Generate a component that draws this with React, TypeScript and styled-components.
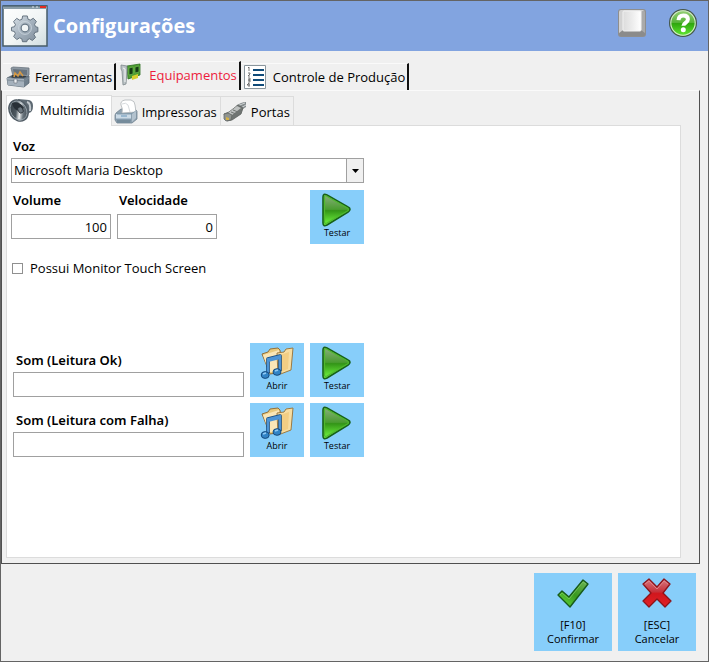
import React, { useId, useState } from "react";
import styled, { createGlobalStyle } from "styled-components";

const GlobalStyle = createGlobalStyle`
  *, *::before, *::after { box-sizing: border-box; }
  body { margin: 0; background: #f0f0f0; }
  body, button, input, select { font-family: "Open Sans", "Noto Sans", sans-serif; font-size: 13px; line-height: 18px; color: #000; }
`;

const Window = styled.div`
  display: flex;
  flex-direction: column;
  min-height: 100vh;
  border: 1px solid #646464;
  background: #f0f0f0;
`;

const Header = styled.header`
  display: flex;
  align-items: center;
  height: 50px;
  padding: 0 10px 0 1px;
  background: #82a4e0;
`;

const Title = styled.h1`
  flex: 1;
  margin: 0 0 0 5px;
  color: #fff;
  font-family: "Open Sans", sans-serif;
  font-size: 20px;
  line-height: 28px;
  font-weight: 700;
`;

const HeaderActions = styled.div`
  display: flex;
  gap: 21px;
  padding-bottom: 6px;
`;

const IconButton = styled.button`
  display: flex;
  padding: 0;
  border: 0;
  background: none;
`;

const MainTabs = styled.nav`
  display: flex;
  align-items: flex-end;
  padding: 10px 0 0 2px;
`;

const MainTab = styled.button<{ $active?: boolean }>`
  display: flex;
  align-items: center;
  gap: 5px;
  height: ${(p) => (p.$active ? 29 : 27)}px;
  padding: ${(p) => (p.$active ? "0 2px 2px 4px" : "0 2px 0 3px")};
  border: 0;
  border-top: 1px solid #fafafa;
  border-right: 2px solid #111;
  background: #f0f0f0;
  color: ${(p) => (p.$active ? "#ed1c3c" : "#000")};
  white-space: nowrap;
`;

const MainPage = styled.main`
  display: flex;
  flex: 1;
  flex-direction: column;
  margin-right: 8px;
  padding: 4px 18px 5px 4px;
  border: 1px solid #505050;
  border-top-color: #fafafa;
`;

const SubTabs = styled.nav`
  display: flex;
  align-items: flex-end;
`;

const SubTab = styled.button<{ $active?: boolean }>`
  display: flex;
  align-items: center;
  gap: ${(p) => (p.$active ? 6 : 4)}px;
  height: ${(p) => (p.$active ? 31 : 29)}px;
  margin-bottom: ${(p) => (p.$active ? -1 : 0)}px;
  padding: ${(p) => (p.$active ? "0 6px 2px 1px" : "2px 3px 0 2px")};
  border: 1px solid #dcdcdc;
  border-bottom: 0;
  border-left-width: ${(p) => (p.$active ? 1 : 0)}px;
  background: ${(p) => (p.$active ? "#fff" : "#f0f0f0")};
  white-space: nowrap;
  z-index: ${(p) => (p.$active ? 1 : 0)};
`;

const Panel = styled.section`
  flex: 1;
  padding: 11px 4px;
  border: 1px solid #dcdcdc;
  background: #fff;
`;

const Form = styled.form`
  display: flex;
  flex-direction: column;
  max-width: 353px;
`;

const Label = styled.label`
  padding-left: 2px;
  font-family: "Noto Sans", sans-serif;
  font-weight: 600;
`;

const Field = styled.div<{ $wide?: boolean }>`
  display: flex;
  flex-direction: column;
  gap: ${(p) => (p.$wide ? 3 : 5)}px;
  ${(p) => (p.$wide ? "flex: 1;" : "")}
`;

const VoiceField = styled(Field)`
  gap: 3px;
`;

const TextInput = styled.input<{ $numeric?: boolean }>`
  width: ${(p) => (p.$numeric ? "100px" : "100%")};
  height: 25px;
  padding: 0 3px;
  border: 1px solid #a0a0a0;
  border-radius: 0;
  background: #fff;
  outline: none;
  text-align: ${(p) => (p.$numeric ? "right" : "left")};
`;

const SelectBox = styled.div`
  display: grid;
  > * { grid-area: 1 / 1; }
`;

const Select = styled.select`
  appearance: none;
  width: 100%;
  height: 25px;
  padding: 0 22px 2px 2px;
  border: 1px solid #a0a0a0;
  border-radius: 0;
  background: #fff;
  outline: none;
`;

const SelectArrow = styled.span`
  display: flex;
  align-items: center;
  justify-content: center;
  justify-self: end;
  width: 18px;
  height: 25px;
  border: 1px solid #a0a0a0;
  background: #f0f0f0;
  pointer-events: none;
`;

const VoiceRow = styled.div`
  display: flex;
  align-items: flex-start;
  justify-content: space-between;
  margin-top: 7px;
`;

const NumberFields = styled.div`
  display: flex;
  gap: 6px;
  padding-top: 1px;
`;

const CheckRow = styled.label`
  display: flex;
  align-items: center;
  gap: 7px;
  margin: 15px 0 0 1px;
`;

const CheckBox = styled.input`
  appearance: none;
  width: 11px;
  height: 11px;
  margin: 0;
  border: 1px solid #909090;
  background: #fff;
  &:checked { background: #444; box-shadow: inset 0 0 0 2px #fff; }
`;

const SoundList = styled.div`
  display: flex;
  flex-direction: column;
  gap: 6px;
  margin-top: 66px;
`;

const SoundRow = styled.div`
  display: flex;
  align-items: flex-end;
  gap: 6px;
  padding-left: 2px;
`;

const SoundLabel = styled(Label)`
  padding-left: 3px;
`;

const Tile = styled.button`
  display: flex;
  flex-direction: column;
  align-items: center;
  width: 54px;
  height: 54px;
  padding: 3px 0 0;
  border: 0;
  background: #87cefa;
  font-size: 9px;
  line-height: 12px;
`;

const Footer = styled.footer`
  display: flex;
  justify-content: flex-end;
  gap: 6px;
  padding: 9px 12px 10px;
`;

const ActionButton = styled.button`
  display: flex;
  flex-direction: column;
  align-items: center;
  gap: 7px;
  width: 78px;
  height: 78px;
  padding: 4px 0 0;
  border: 0;
  background: #87cefa;
  font-size: 11px;
  line-height: 14px;
`;

const Caption = styled.span`
  white-space: pre-line;
`;

const WindowGearIcon = () => {
  const id = useId();
  return (
    <svg width="46" height="42" viewBox="0 0 46 42" aria-hidden="true">
      <defs>
        <linearGradient id={id + "p"} x1="0" y1="0" x2="1" y2="1">
          <stop offset="0" stopColor="#fff" /><stop offset=".55" stopColor="#f1f5f5" /><stop offset="1" stopColor="#cfdcdf" />
        </linearGradient>
        <linearGradient id={id + "g"} x1="0" y1="0" x2="1" y2="1">
          <stop offset="0" stopColor="#dce4ea" /><stop offset=".5" stopColor="#a4b1bd" /><stop offset="1" stopColor="#7f8d9b" />
        </linearGradient>
      </defs>
      <rect x="1" y="1" width="44" height="40" fill={`url(#${id}p)`} stroke="#475c68" strokeWidth="1.5" />
      <path d="M1 1h44v3H1z" fill="#8b9ea9" /><path d="M1 1h44" stroke="#3d5564" />
      <path d="M38 1h6v2h-6z" fill="#e32c22" /><path d="M30 2h2m2 0h2" stroke="#dfe6ea" />
      <g transform="translate(23 22) scale(.92)">
        <path d="M-2.5-12h5l.8 3.5 2.5 1 3.2-2 3.4 3.5-2 3.1 1 2.5 2.6.8v4.8l-3.3.7-1 2.4 1.8 3-3.5 3.4-3-1.9-2.3 1-.8 2.2h-4.6l-.8-3.2-2.4-1-3 1.9-3.4-3.4 1.8-3-1-2.4-3.2-.8V.4l3.3-.7 1-2.4-2-3.1L-9-9.4l3.2 2 2.5-1z" fill={`url(#${id}g)`} stroke="#5e6c79" />
        <circle cy="1" r="7" fill="none" stroke="#c9d3dc" />
        <circle cy="1" r="4.2" fill="#f1f5f6" stroke="#667685" strokeWidth="1.3" />
      </g>
    </svg>
  );
};

const KeyIcon = () => {
  const id = useId();
  return (
    <svg width="30" height="30" viewBox="0 0 30 30" aria-hidden="true">
      <defs>
        <linearGradient id={id} x1="0" y1="0" x2="1" y2="0"><stop offset="0" stopColor="#dcdcdc" /><stop offset=".5" stopColor="#ececec" /><stop offset="1" stopColor="#fff" /></linearGradient>
      </defs>
      <rect x="1" y="1" width="28" height="28" rx="3" fill="#8e8e8e" />
      <path d="M2 26L7 22h18l3 4q0 2-3 2H5q-3 0-3-2z" fill="#8b8b8b" />
      <path d="M2 4q0-2 2-2h22q2 0 1 1l-3 2H6v17l-4 3z" fill="#d2d2d2" />
      <path d="M28 4v21l-4-3V4l3-2z" fill="#aaa" />
      <rect x="6" y="3" width="18" height="20" rx="1" fill={`url(#${id})`} stroke="#f2f2f2" />
    </svg>
  );
};

const HelpIcon = () => {
  const id = useId();
  return (
    <svg width="30" height="30" viewBox="0 0 30 30" aria-hidden="true">
      <defs>
        <linearGradient id={id} x1="0" y1="0" x2="0" y2="1"><stop offset="0" stopColor="#9bd27c" /><stop offset=".48" stopColor="#58b43a" /><stop offset=".52" stopColor="#2fa60e" /><stop offset="1" stopColor="#64ed35" /></linearGradient>
      </defs>
      <circle cx="15" cy="15" r="13.4" fill={`url(#${id})`} stroke="#46564d" strokeWidth="1.2" />
      <circle cx="15" cy="15" r="12.2" fill="none" stroke="#d3e8cb" strokeWidth="1.1" />
      <path d="M10.5 12.2C10.7 8.7 12.6 7.4 15.3 7.4c3 0 4.6 1.6 4.6 3.8 0 3.7-4.5 3.4-4.5 6.6" fill="none" stroke="#fff" strokeWidth="4" />
      <circle cx="15.3" cy="21.8" r="2.5" fill="#fff" />
    </svg>
  );
};

const ToolboxIcon = () => (
  <svg width="24" height="22" viewBox="0 0 24 22" aria-hidden="true">
    <path d="M5 2l2-1 16 1v7l-3 3L7 10z" fill="#8b96a0" stroke="#69757f" strokeWidth=".8" />
    <path d="M7 3l14 1v5L8 8z" fill="#69747e" />
    <path d="M6 9l15 1-3 3-15-1z" fill="#343c43" />
    <path d="M8 11l1-4 3 3 2-4 3 4" fill="none" stroke="#d69a45" strokeWidth="1.6" />
    <path d="M1 12l4-2 1 2h12l5-2v7l-5 4-16-2z" fill="#71808d" stroke="#586671" strokeWidth=".8" />
    <path d="M1 12l17 1v8L2 19z" fill="#a5b1bc" /><path d="M1 14l17 1 5-3" fill="none" stroke="#7b8893" />
    <path d="M8 13h3v4H8z" fill="#edf0f2" stroke="#687078" strokeWidth=".6" />
  </svg>
);

const BoardIcon = () => (
  <svg width="24" height="26" viewBox="0 0 24 26" aria-hidden="true">
    <path d="M7 4l13-2v11L8 17z" fill="#4f9d32" stroke="#2b6d20" strokeWidth=".8" />
    <path d="M9 6l4-1v7l-4 1zM15 5l4-1v6l-4 1z" fill="#153c14" stroke="#70bb4f" strokeWidth=".7" />
    <path d="M12 14l6-2v4l-6 2z" fill="#d8cf30" />
    <path d="M1 3l6 1v5L6 22l-3 1-1-14-1-2z" fill="#bac2c5" stroke="#7e888b" strokeWidth=".8" /><path d="M3 6l2 1v13" fill="none" stroke="#f5f6f6" />
  </svg>
);

const NumberedListIcon = () => (
  <svg width="24" height="24" viewBox="0 0 24 24" aria-hidden="true">
    <path d="M.5.5h21v23H.5z" fill="#fff" stroke="#89959c" />
    <path d="M9 5h11M9 10h11M9 15h11M9 20h11" stroke="#104b79" strokeWidth="2" />
    <path d="M4 3l1-1v4M4 8h2v1l-2 2h2M4 13h2v2H4h2v2H4M5 22v-4l-2 2h3" fill="none" stroke="#555" strokeWidth=".8" />
  </svg>
);

const SpeakerIcon = () => {
  const id = useId();
  return (
    <svg width="26" height="26" viewBox="0 0 26 26" aria-hidden="true">
      <defs><linearGradient id={id} x1="0" y1="0" x2="1" y2="1"><stop offset="0" stopColor="#283037" /><stop offset=".42" stopColor="#4d5860" /><stop offset=".55" stopColor="#edf0f1" /><stop offset=".68" stopColor="#68737b" /><stop offset="1" stopColor="#242c32" /></linearGradient></defs>
      <path d="M10 2l11 1q4 1 4 6 0 6-4 7l-8 7z" fill="#5d6972" />
      <path d="M19 5q4 1 3 9" fill="none" stroke="#c2c9ce" strokeWidth="2" />
      <ellipse cx="10.5" cy="13.5" rx="9" ry="11.2" transform="rotate(-32 10.5 13.5)" fill={`url(#${id})`} stroke="#515c65" strokeWidth="1.4" />
      <ellipse cx="10.5" cy="13.5" rx="7.8" ry="10" transform="rotate(-32 10.5 13.5)" fill="none" stroke="#9ca8b0" strokeWidth=".8" />
      <path d="M4 6q8-2 12 5l-4 3Q5 13 4 6z" fill="#283037" />
      <ellipse cx="12.5" cy="13" rx="2.5" ry="3.3" transform="rotate(-32 12.5 13)" fill="#6b767e" stroke="#20272d" strokeWidth=".7" />
    </svg>
  );
};

const PrinterIcon = () => (
  <svg width="24" height="26" viewBox="0 0 24 26" aria-hidden="true">
    <path d="M2 14l5-4h14l2 2v8l-5 4H3l-2-3v-5z" fill="#8ea1af" stroke="#718392" strokeWidth=".8" />
    <path d="M8 14q1-5-1-8-1-4 4-5h6q4 1 4 5l1 7z" fill="#fff" stroke="#aeb4b8" strokeWidth=".8" />
    <path d="M8 5q4-2 6 1l2 7" fill="none" stroke="#d6dadd" />
    <path d="M2 15h15v5H2z" fill="#cbdae6" /><path d="M3 15h14l5-3M2 20h15" stroke="#7793a7" strokeWidth=".8" fill="none" />
    <path d="M3 21h14l-1 3H3z" fill="#758b9b" /><path d="M18 15l4-3v7l-4 4z" fill="#b3c2ce" />
    <path d="M7 17h6" stroke="#6795b9" />
  </svg>
);

const PlugIcon = () => (
  <svg width="24" height="22" viewBox="0 0 24 22" aria-hidden="true">
    <path d="M13 5q5-4 10-4v5l-8 5z" fill="#838a8c" /><path d="M14 5l8-3M16 8l7-4" stroke="#d0d4d5" />
    <path d="M1 13l5-2 9-7 5 3-2 6-9 6-5 1z" fill="#707573" stroke="#5a5f5d" strokeWidth=".8" />
    <path d="M5 12l9-7 4 2-9 7z" fill="#bfc2c1" /><path d="M1 13l4-1 4 2-1 5-5 1-2-2z" fill="#8f938f" stroke="#646a67" strokeWidth=".8" />
    <path d="M3 16l3 1v2H3z" fill="#d3b148" /><path d="M8 11l5 2m-3-4l5 2" stroke="#6f7472" />
  </svg>
);

const PlayIcon = () => {
  const id = useId();
  return (
    <svg width="32" height="34" viewBox="0 0 32 34" aria-hidden="true">
      <defs><linearGradient id={id} x1="0" y1="0" x2="0" y2="1"><stop offset="0" stopColor="#8baf7f" /><stop offset=".48" stopColor="#4a9c30" /><stop offset=".52" stopColor="#339517" /><stop offset="1" stopColor="#76ff43" /></linearGradient></defs>
      <path d="M2 4q0-4 4-2l21 12q4 2 0 5L6 32q-4 2-4-2z" fill={`url(#${id})`} stroke="#17611a" strokeWidth="1.6" />
      <path d="M3.5 4q0-2 2-1l21 12q2 2 0 3L6 30q-2.5 1-2.5-1z" fill="none" stroke="#4fb82d" strokeWidth="1.2" />
    </svg>
  );
};

const MusicFolderIcon = () => (
  <svg width="34" height="34" viewBox="0 0 34 34" aria-hidden="true">
    <path d="M2 8l6-2 2-3 8-1 2 2 3 22-13 2z" fill="#e9c97b" stroke="#91703b" />
    <path d="M3 9l16-5 2 22H9z" fill="#f9e6b7" />
    <path d="M17 7l7-1 2-3 7-1-2 22-13 5z" fill="#f7dda1" stroke="#9b7a43" />
    <path d="M20 9l9-3-1 17-8 3z" fill="#f2ce84" />
    <path d="M8 27V13l12-3v15" fill="none" stroke="#174d81" strokeWidth="3.6" strokeLinejoin="round" />
    <path d="M8 27V13l12-3v15M8 15l12-3" fill="none" stroke="#4c94d6" strokeWidth="2" />
    <ellipse cx="5.2" cy="29" rx="4" ry="3.4" fill="#3284c6" stroke="#154a7d" /><ellipse cx="17" cy="26" rx="4" ry="3.3" fill="#3284c6" stroke="#154a7d" />
    <path d="M3 28l3-1M15 25l3-1" stroke="#92cbf5" strokeWidth="1.5" />
  </svg>
);

const CheckIcon = () => {
  const id = useId();
  return (
    <svg width="32" height="34" viewBox="0 0 32 34" aria-hidden="true">
      <defs><linearGradient id={id} x1="1" y1="0" x2="0" y2="1"><stop offset="0" stopColor="#70b45a" /><stop offset=".5" stopColor="#39991f" /><stop offset="1" stopColor="#67e13d" /></linearGradient></defs>
      <path d="M1 18l4-4 7 6L26 3l5 4-18 23z" fill={`url(#${id})`} stroke="#175a1b" strokeWidth="1.4" strokeLinejoin="round" />
      <path d="M3 18l2-2 7 6L26 5l3 2" fill="none" stroke="#80cd68" strokeWidth=".7" />
    </svg>
  );
};

const CrossIcon = () => {
  const id = useId();
  return (
    <svg width="32" height="34" viewBox="0 0 32 34" aria-hidden="true">
      <defs><linearGradient id={id} x1="0" y1="0" x2="0" y2="1"><stop offset="0" stopColor="#d77a80" /><stop offset=".45" stopColor="#c6313a" /><stop offset=".52" stopColor="#d1161d" /><stop offset="1" stopColor="#e12226" /></linearGradient></defs>
      <path d="M2 7l6-5 8 8 7-8 6 5-7 9 8 8-6 6-8-8-8 8-6-6 8-8z" fill={`url(#${id})`} stroke="#8b141b" strokeWidth="1.3" strokeLinejoin="round" />
      <path d="M4 7l4-3 8 8 7-8 4 3" fill="none" stroke="#e68b90" strokeWidth=".8" />
    </svg>
  );
};

const TestButton = () => <Tile type="button"><PlayIcon />Testar</Tile>;

const SoundField = ({ id, label }: { id: string; label: string }) => (
  <SoundRow>
    <Field $wide>
      <SoundLabel htmlFor={id}>{label}</SoundLabel>
      <TextInput id={id} type="text" />
    </Field>
    <Tile type="button"><MusicFolderIcon />Abrir</Tile>
    <TestButton />
  </SoundRow>
);

export default function App() {
  const [touch, setTouch] = useState(false);
  return (
    <>
      <GlobalStyle />
      <Window>
        <Header>
          <WindowGearIcon />
          <Title>Configurações</Title>
          <HeaderActions>
            <IconButton aria-label="Teclado"><KeyIcon /></IconButton>
            <IconButton aria-label="Ajuda"><HelpIcon /></IconButton>
          </HeaderActions>
        </Header>
        <MainTabs>
          <MainTab><ToolboxIcon />Ferramentas</MainTab>
          <MainTab $active><BoardIcon />Equipamentos</MainTab>
          <MainTab><NumberedListIcon />Controle de Produção</MainTab>
        </MainTabs>
        <MainPage>
          <SubTabs>
            <SubTab $active><SpeakerIcon />Multimídia</SubTab>
            <SubTab><PrinterIcon />Impressoras</SubTab>
            <SubTab><PlugIcon />Portas</SubTab>
          </SubTabs>
          <Panel>
            <Form onSubmit={(e) => e.preventDefault()}>
              <VoiceField>
                <Label htmlFor="voz">Voz</Label>
                <SelectBox>
                  <Select id="voz"><option>Microsoft Maria Desktop</option></Select>
                  <SelectArrow><svg width="7" height="4" aria-hidden="true"><path d="M0 0h7L3.5 4z" /></svg></SelectArrow>
                </SelectBox>
              </VoiceField>
              <VoiceRow>
                <NumberFields>
                  <Field>
                    <Label htmlFor="volume">Volume</Label>
                    <TextInput id="volume" $numeric inputMode="numeric" defaultValue="100" />
                  </Field>
                  <Field>
                    <Label htmlFor="velocidade">Velocidade</Label>
                    <TextInput id="velocidade" $numeric inputMode="numeric" defaultValue="0" />
                  </Field>
                </NumberFields>
                <TestButton />
              </VoiceRow>
              <CheckRow>
                <CheckBox type="checkbox" checked={touch} onChange={(e) => setTouch(e.target.checked)} />
                Possui Monitor Touch Screen
              </CheckRow>
              <SoundList>
                <SoundField id="som-ok" label="Som (Leitura Ok)" />
                <SoundField id="som-falha" label="Som (Leitura com Falha)" />
              </SoundList>
            </Form>
          </Panel>
        </MainPage>
        <Footer>
          <ActionButton type="button"><CheckIcon /><Caption>{"[F10]\nConfirmar"}</Caption></ActionButton>
          <ActionButton type="button"><CrossIcon /><Caption>{"[ESC]\nCancelar"}</Caption></ActionButton>
        </Footer>
      </Window>
    </>
  );
}
